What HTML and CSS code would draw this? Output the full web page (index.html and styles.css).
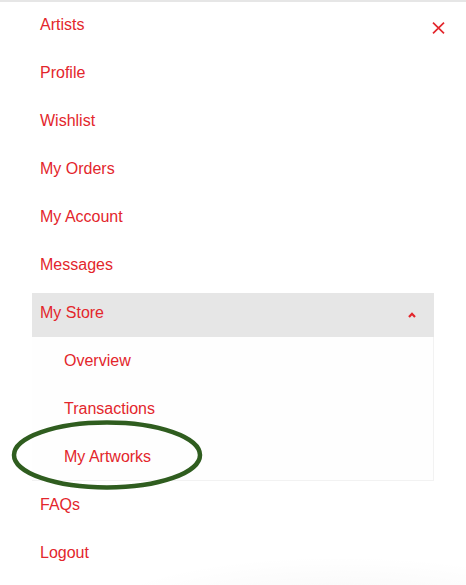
FILE: index.html
```html
<!DOCTYPE html>
<html>
<head>
<meta charset="utf-8">
<link rel="stylesheet" href="styles.css">
</head>
<body>
<div class="panel">
  <button class="close" aria-label="Close">
    <svg width="13" height="12" viewBox="0 0 13 12"><path d="M1 0.7 L12 11.3 M12 0.7 L1 11.3" stroke="#e3262c" stroke-width="1.7" fill="none"/></svg>
  </button>
  <ul class="menu">
    <li class="item">Artists</li>
    <li class="item">Profile</li>
    <li class="item">Wishlist</li>
    <li class="item">My Orders</li>
    <li class="item">My Account</li>
    <li class="item">Messages</li>
    <li class="group">
      <div class="group-head">
        <span>My Store</span>
        <svg class="chev" width="8" height="6" viewBox="0 0 8 6"><path d="M1 5 L4 1.8 L7 5" stroke="#e3262c" stroke-width="2.2" fill="none"/></svg>
      </div>
      <ul class="sub">
        <li class="sub-item">Overview</li>
        <li class="sub-item">Transactions</li>
        <li class="sub-item circled">My Artworks
          <svg class="ring" width="200" height="76" viewBox="0 0 200 76"><ellipse cx="100" cy="38" rx="93" ry="32.5" stroke="#2f5d1f" stroke-width="4.5" fill="none"/></svg>
        </li>
      </ul>
    </li>
    <li class="item">FAQs</li>
    <li class="item">Logout</li>
  </ul>
  <div class="shade"></div>
</div>
</body>
</html>
```
FILE: styles.css
```css
html, body {
  margin: 0;
  padding: 0;
  background: #ffffff;
}
body {
  font-family: "Liberation Sans", Arial, Helvetica, sans-serif;
  font-size: 16px;
  color: #e3262c;
}
.panel {
  position: relative;
  width: 466px;
  height: 585px;
  overflow: hidden;
  border-top: 2px solid #e6e6e6;
  box-sizing: border-box;
}
.close {
  position: absolute;
  top: 20px;
  left: 432px;
  padding: 0;
  border: 0;
  background: none;
  width: 13px;
  height: 12px;
  display: block;
}
.close svg { display: block; }
.menu {
  list-style: none;
  margin: 0;
  padding: 0 0 0 32px;
  width: 402px;
}
.item {
  height: 48px;
  line-height: 48px;
  padding-left: 8px;
}
.item:first-child {
  height: 47px;
  line-height: 46px;
}
.group {
  margin-top: 4px;
}
.group-head {
  height: 44px;
  background: #e6e6e6;
  display: flex;
  align-items: center;
  justify-content: space-between;
  padding: 0 18px 4px 8px;
  box-sizing: border-box;
}
.chev { display: block; margin-top: 3px; }
.sub {
  list-style: none;
  margin: 0;
  padding: 0;
  border-right: 1px solid #f2f2f2;
  border-bottom: 1px solid #f2f2f2;
  background: #fefefe;
}
.sub-item {
  height: 48px;
  line-height: 48px;
  padding-left: 32px;
  position: relative;
}
.sub-item:last-child { height: 47px; }
.ring {
  position: absolute;
  left: -25px;
  top: -16px;
}
.shade {
  position: absolute;
  left: 90px;
  right: -40px;
  bottom: -30px;
  height: 60px;
  background: radial-gradient(ellipse at 60% 100%, rgba(0,0,0,0.04), rgba(0,0,0,0) 70%);
  pointer-events: none;
}
```
